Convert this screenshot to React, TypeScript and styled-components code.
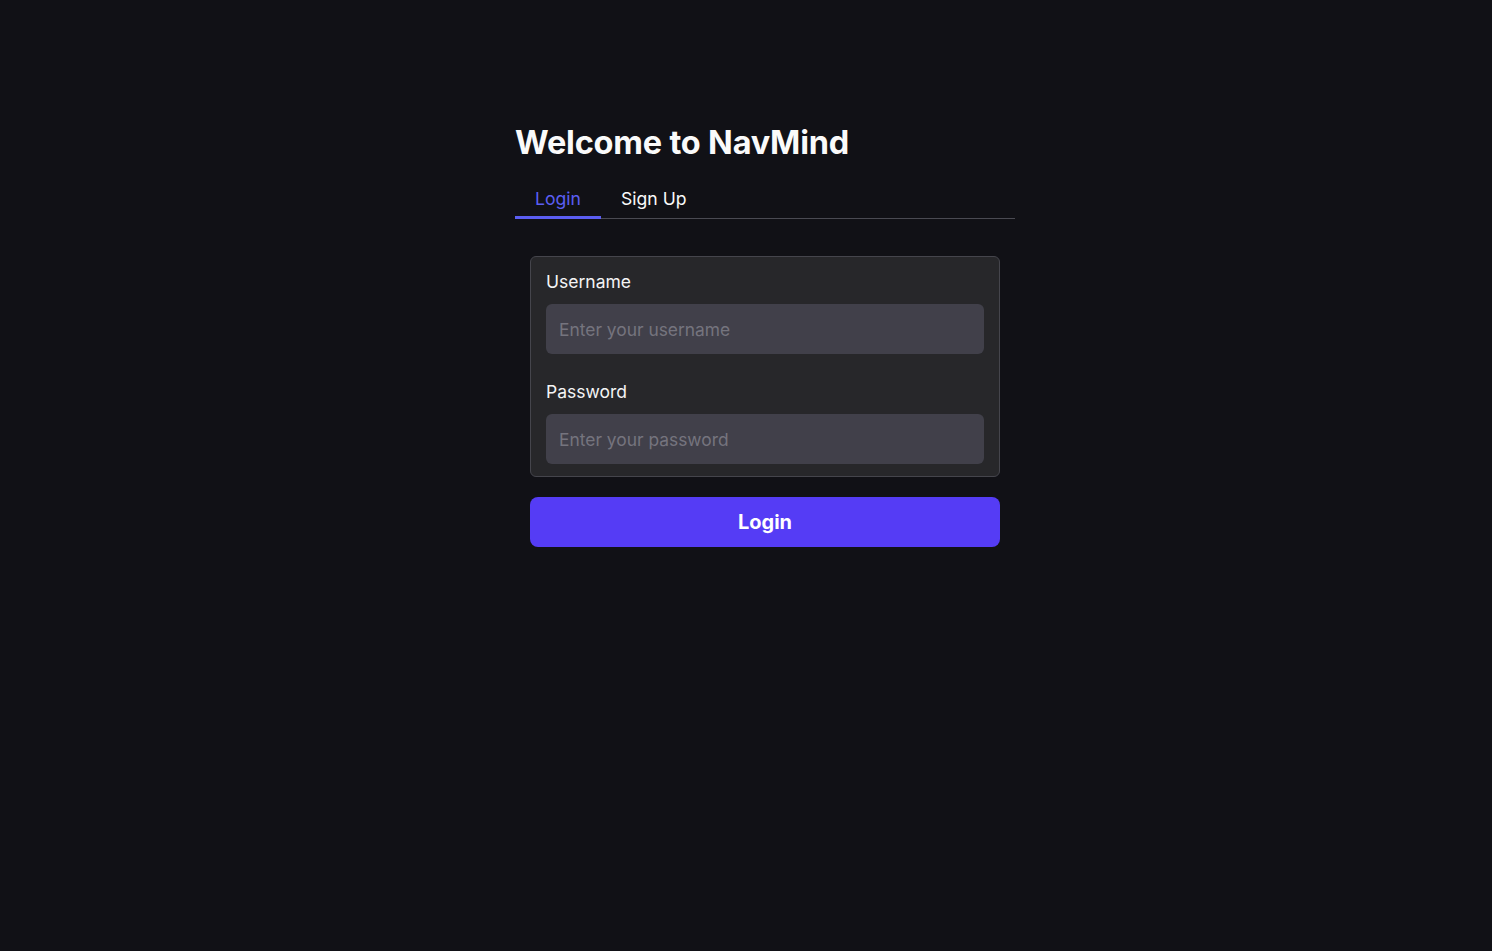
import React, { useState } from "react";
import styled, { createGlobalStyle } from "styled-components";

const Global = createGlobalStyle`
  html, body { margin: 0; padding: 0; background: #111116; }
  body { font-family: Inter, "Noto Sans", sans-serif; color: #fafafa; }
  * { box-sizing: border-box; }
`;

const Page = styled.div`
  min-height: 951px;
  background: #111116;
  padding: 123px 0 0 515px;
`;

const Column = styled.div`
  width: 500px;
  display: flex;
  flex-direction: column;
`;

const Title = styled.h1`
  margin: 0;
  font-size: 32.5px;
  font-weight: 700;
  line-height: 40px;
  letter-spacing: -0.2px;
  color: #fafafa;
`;

const TabBar = styled.div`
  margin-top: 23px;
  display: flex;
  border-bottom: 1px solid #4a4a52;
`;

const Tab = styled.button<{ $active?: boolean }>`
  background: none;
  border: none;
  padding: 0 20px 4px;
  margin-bottom: -1px;
  font-family: inherit;
  font-size: 17.6px;
  line-height: 26px;
  color: ${(p) => (p.$active ? "#5b5ef2" : "#fafafa")};
  border-bottom: 3px solid ${(p) => (p.$active ? "#5b5ef2" : "transparent")};
  cursor: pointer;
`;

const Body = styled.div`
  margin: 37px 15px 0;
  display: flex;
  flex-direction: column;
  gap: 20px;
`;

const Card = styled.div`
  background: #27272a;
  border: 1px solid #45454c;
  border-radius: 6px;
  padding: 13px 15px 12px;
  display: flex;
  flex-direction: column;
`;

const Field = styled.div<{ $first?: boolean }>`
  display: flex;
  flex-direction: column;
  margin-top: ${(p) => (p.$first ? "0" : "26px")};
`;

const Label = styled.label`
  font-size: 17.5px;
  line-height: 24px;
  color: #f4f4f5;
  margin-bottom: 10px;
`;

const Input = styled.input`
  height: 50px;
  width: 100%;
  background: #41404a;
  border: none;
  border-radius: 6px;
  padding: 0 13px;
  font-family: inherit;
  font-size: 17.4px;
  color: #fafafa;
  outline: none;
  &::placeholder { color: #75747e; }
`;

const Submit = styled.button`
  height: 50px;
  width: 100%;
  background: #553cf5;
  border: none;
  border-radius: 8px;
  color: #fff;
  font-family: inherit;
  font-size: 20px;
  font-weight: 700;
  cursor: pointer;
`;

export default function App() {
  const [tab, setTab] = useState<"login" | "signup">("login");
  return (
    <Page>
      <Global />
      <Column>
        <Title>Welcome to NavMind</Title>
        <TabBar>
          <Tab $active={tab === "login"} onClick={() => setTab("login")}>Login</Tab>
          <Tab $active={tab === "signup"} onClick={() => setTab("signup")}>Sign Up</Tab>
        </TabBar>
        <Body>
          <Card>
            <Field $first>
              <Label>Username</Label>
              <Input placeholder="Enter your username" />
            </Field>
            <Field>
              <Label>Password</Label>
              <Input type="password" placeholder="Enter your password" />
            </Field>
          </Card>
          <Submit>Login</Submit>
        </Body>
      </Column>
    </Page>
  );
}
